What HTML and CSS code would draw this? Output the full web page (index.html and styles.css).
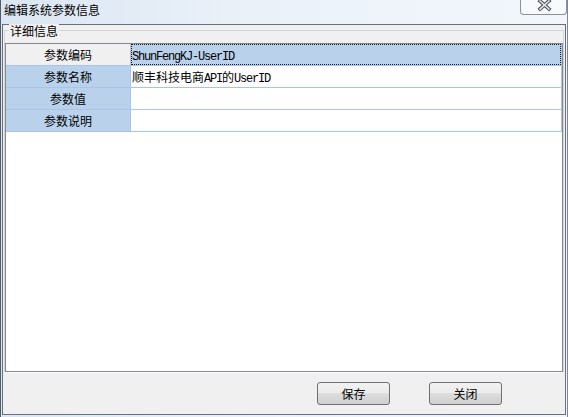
FILE: index.html
```html
<!DOCTYPE html>
<html lang="zh-CN">
<head>
    <meta charset="UTF-8">
    <title>编辑系统参数信息</title>
    <link rel="stylesheet" href="styles.css">
</head>
<body>
    <div class="window">
        <div class="titlebar">
            <span class="title">编辑系统参数信息</span>
            <div class="close-btn">
                <svg width="45" height="14" viewBox="0 0 45 14">
                    <path d="M19 1 L28 9 M28 1 L19 9" stroke="#4a4f57" stroke-width="3.6" stroke-linecap="square" fill="none"/>
                    <path d="M19 1 L28 9 M28 1 L19 9" stroke="#e4e6ea" stroke-width="1.6" stroke-linecap="square" fill="none"/>
                </svg>
            </div>
        </div>

        <div class="client">
            <div class="group">
                <span class="legend">详细信息</span>
                <div class="grid">
                    <div class="row">
                        <div class="row-head current">参数编码</div>
                        <div class="cell selected"><span class="mono">ShunFengKJ-UserID</span></div>
                    </div>
                    <div class="row">
                        <div class="row-head">参数名称</div>
                        <div class="cell">顺丰科技电商<span class="mono">API</span>的<span class="mono">UserID</span></div>
                    </div>
                    <div class="row">
                        <div class="row-head">参数值</div>
                        <div class="cell"></div>
                    </div>
                    <div class="row">
                        <div class="row-head">参数说明</div>
                        <div class="cell"></div>
                    </div>
                </div>
            </div>

            <div class="buttons">
                <button class="btn">保存</button>
                <button class="btn">关闭</button>
            </div>
        </div>
    </div>
</body>
</html>
```

FILE: styles.css
```css
body {
    margin: 0;
    font-family: "Noto Sans CJK SC", "Liberation Sans", sans-serif;
    font-size: 12px;
    color: #000;
    background: #dfe8f2;
}

.window {
    width: 568px;
    height: 417px;
    box-sizing: border-box;
    padding: 0 0 2px 1px;
    border-left: 1px solid #525d69;
    border-right: 1px solid #7d8894;
    background: linear-gradient(90deg, #dbe6f2 0%, #e9f0f8 40%, #eef4fa 70%, #f2f6fb 100%);
    display: flex;
    flex-direction: column;
}

/* title bar */
.titlebar {
    height: 24px;
    display: flex;
    align-items: flex-start;
}

.title {
    padding: 3px 0 0 2px;
    line-height: 14px;
}

.close-btn {
    margin-left: auto;
    width: 47px;
    height: 15px;
    box-sizing: border-box;
    border: 1px solid #8a919b;
    border-top: none;
    border-radius: 0 0 4px 4px;
    background: rgba(255, 255, 255, 0.45);
}

.close-btn svg {
    display: block;
}

/* client area */
.client {
    flex: 1;
    margin-right: 1px;
    border: 1px solid #66717d;
    background: #f0f0f0;
    display: flex;
    flex-direction: column;
}

.group {
    position: relative;
    margin: 5px 1px 0 1px;
    padding-top: 12px;
    border: 1px solid #d5d5d5;
    border-bottom-color: #fff;
}

.legend {
    position: absolute;
    top: -7px;
    left: 4px;
    padding: 0 1px;
    line-height: 14px;
    background: #f0f0f0;
}

/* data grid */
.grid {
    height: 329px;
    box-sizing: border-box;
    border: 1px solid #828790;
    background: #fff;
}

.row {
    display: flex;
    height: 22px;
    box-sizing: border-box;
    border-bottom: 1px solid #a9c4e6;
    border-right: 1px solid #a9c4e6;
}

.row-head {
    width: 125px;
    box-sizing: border-box;
    border-right: 1px solid #a9c4e6;
    background: #b9d1ea;
    text-align: center;
    line-height: 21px;
}

.row-head.current {
    background: #f0f0f0;
}

.cell {
    flex: 1;
    padding-left: 1px;
    line-height: 21px;
    white-space: nowrap;
}

.cell.selected {
    padding-left: 0;
    border: 1px dotted #1a1a1a;
    line-height: 19px;
    background: #b9d1ea;
}

.mono {
    font-family: "Liberation Mono", monospace;
    font-size: 12px;
    letter-spacing: -1.2px;
}

/* bottom buttons */
.buttons {
    flex: 1;
    display: flex;
    justify-content: flex-end;
    align-items: flex-start;
    gap: 39px;
    padding: 9px 63px 0 0;
}

.btn {
    width: 73px;
    height: 23px;
    padding: 0;
    border: 1px solid #707070;
    border-radius: 3px;
    background: linear-gradient(#f2f2f2 0%, #ebebeb 50%, #dddddd 50%, #cfcfcf 100%);
    font-family: "Noto Sans CJK SC", sans-serif;
    font-size: 12px;
    color: #000;
}
```
